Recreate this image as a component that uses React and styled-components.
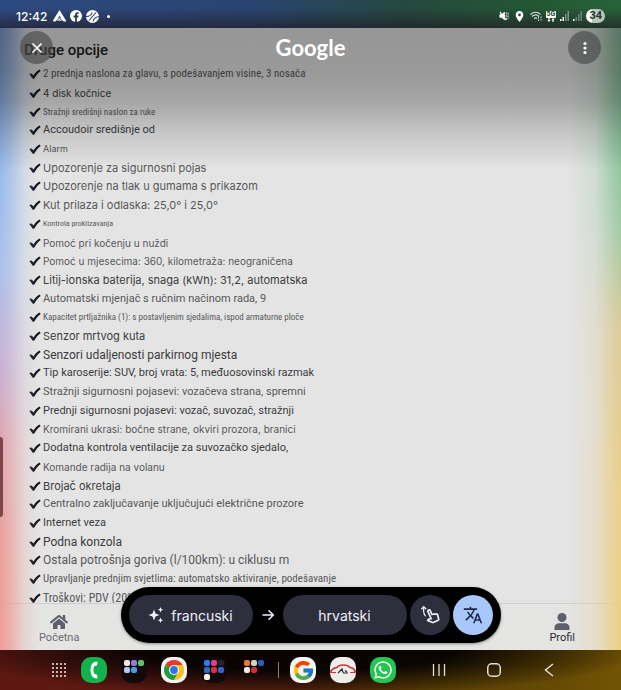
import React from 'react'
import styled, { createGlobalStyle, css } from 'styled-components'
import { FaHome, FaWhatsapp } from 'react-icons/fa'
import { FcGoogle } from 'react-icons/fc'
import { MdOutlineSwipeUp, MdTranslate, MdLocationOn } from 'react-icons/md'

const options = [
    { text: '2 prednja naslona za glavu, s podešavanjem visine, 3 nosača', size: 11, font: 'narrow' },
    { text: '4 disk kočnice', size: 10, font: 'wide', strong: true },
    { text: 'Stražnji središnji naslon za ruke', size: 9, font: 'narrow' },
    { text: 'Accoudoir središnje od', size: 11, strong: true },
    { text: 'Alarm', size: 9, font: 'wide' },
    { text: 'Upozorenje za sigurnosni pojas', size: 11, font: 'wide' },
    { text: 'Upozorenje na tlak u gumama s prikazom', size: 11, font: 'wide' },
    { text: 'Kut prilaza i odlaska: 25,0° i 25,0°', size: 11, font: 'wide' },
    { text: 'Kontrola proklizavanja', size: 8, font: 'narrow' },
    { text: 'Pomoć pri kočenju u nuždi', size: 10, font: 'wide' },
    { text: 'Pomoć u mjesecima: 360, kilometraža: neograničena', size: 10, font: 'wide' },
    { text: 'Litij-ionska baterija, snaga (kWh): 31,2, automatska', size: 11, font: 'wide', strong: true },
    { text: 'Automatski mjenjač s ručnim načinom rada, 9', size: 11 },
    { text: 'Kapacitet prtljažnika (1): s postavljenim sjedalima, ispod armaturne ploče', size: 9, font: 'narrow' },
    { text: 'Senzor mrtvog kuta', size: 11, font: 'wide', strong: true },
    { text: 'Senzori udaljenosti parkirnog mjesta', size: 12, strong: true },
    { text: 'Tip karoserije: SUV, broj vrata: 5, međuosovinski razmak', size: 11, strong: true },
    { text: 'Stražnji sigurnosni pojasevi: vozačeva strana, spremni', size: 11 },
    { text: 'Prednji sigurnosni pojasevi: vozač, suvozač, stražnji', size: 11, strong: true },
    { text: 'Kromirani ukrasi: bočne strane, okviri prozora, branici', size: 10, font: 'wide' },
    { text: 'Dodatna kontrola ventilacije za suvozačko sjedalo,', size: 11, strong: true },
    { text: 'Komande radija na volanu', size: 10, font: 'wide' },
    { text: 'Brojač okretaja', size: 11, font: 'wide', strong: true },
    { text: 'Centralno zaključavanje uključujući električne prozore', size: 11 },
    { text: 'Internet veza', size: 11, strong: true },
    { text: 'Podna konzola', size: 12, strong: true },
    { text: 'Ostala potrošnja goriva (l/100km): u ciklusu m', size: 12 },
    { text: 'Upravljanje prednjim svjetlima: automatsko aktiviranje, podešavanje', size: 11, font: 'narrow' },
    { text: 'Troškovi: PDV (20%)', size: 12, font: 'narrow' },
]

const fonts = {
    narrow: '"Roboto Condensed", Roboto, sans-serif',
    wide: 'Inter, sans-serif',
}

const mailFolder = ['#f1e6e6', '#8b7fd6', '#62c466', '#a9cdf3', '#4c9be0']
const socialFolder = ['#2f7bf0', '#e23f86', '#20242e', '#2b6fc4', '#d9303c', '#3563c9', '#f3f3f3']
const toolsFolder = ['#e8743b', '#cfd3c2', '#2a5fb8', '#f0e9e4', '#cf2f33']

function CheckMark() {
    return (
        <svg width="12" height="10" viewBox="0 0 12 10" aria-hidden="true">
            <path d="M0.3 5 C1.6 4 2.800 4.300 3.400 5.200 L4.400 6.400 C6 4 8 2 10.4 0.5 L11.700 1.900 C9 3.900 7 6.200 5.500 9.200 C5 10 4 10 3.400 9.300 Z" fill="#15151f" />
        </svg>
    )
}

function StatusIcons() {
    return (
        <StatusGroup>
            <svg width="10" height="12" viewBox="0 0 11 12" fill="none" stroke="#fff">
                <path d="M1 4.500h2L6 2v8L3 7.500H1z" fill="#fff" />
                <path d="M1 1.500l7 9" strokeWidth="1.200" />
                <path d="M8 2v8M10 2.500v7" strokeDasharray="2 1" />
            </svg>
            <MdLocationOn size={13} color="#fff" />
            <svg width="12" height="12" viewBox="0 0 12 12" fill="none" stroke="#d8e4da">
                <path d="M0.500 4.500C3.500 1.800 7.500 1.800 10.500 4.500M2 6.500c2-1.800 5-1.800 7 0M4 8.500c1-.8 2-.8 3 0" strokeWidth="1.100" />
                <path d="M8.500 11V6.500M11 6.500V11" strokeDasharray="1.500 1" />
            </svg>
            <FiveG>
                <span>5G</span>
                <svg width="8" height="4" viewBox="0 0 8 4" fill="#fff">
                    <path d="M0.500 2L2 4l1.500-2H2.600V0H1.400v2zM4.500 2L6 0l1.500 2H6.600v2H5.400V2z" />
                </svg>
            </FiveG>
            <svg width="9" height="10" viewBox="0 0 9 10">
                <path d="M0 8h1.500v2H0zM2.500 6H4v4H2.500z" fill="#fff" />
                <path d="M5 3h1.500v7H5zM7.500 0H9v10H7.500z" fill="#7c9482" />
            </svg>
            <svg width="9" height="10" viewBox="0 0 9 10">
                <path d="M0 8h1.500v2H0z" fill="#fff" />
                <path d="M2.500 6H4v4H2.500zM5 3h1.500v7H5zM7.500 0H9v10H7.500z" fill="#6c8472" />
            </svg>
            <Battery>34</Battery>
        </StatusGroup>
    )
}

function Folder({ colors, label, clear }) {
    return (
        <FolderTile type="button" aria-label={label} $clear={clear}>
            {colors.map((color, i) => <FolderDot key={i} $color={color} />)}
        </FolderTile>
    )
}

function App() {
    return (
        <Screen>
            <GlobalStyle />
            <StatusBar>
                <StatusGroup>
                    <Clock>12:42</Clock>
                    <svg width="13" height="12" viewBox="0 0 13 12">
                        <path d="M6.500 0 L13 10.500 C13 11.800 11.500 12 10.500 11.200 L6.500 8 L2.500 11.200 C1.500 12 0 11.800 0 10.500 Z" fill="#fff" />
                        <path d="M6.500 5.500 L8.500 9 L6.500 7.600 L4.500 9 Z" fill="#2b4267" />
                        <path d="M6.500 8.500 L9 11 L6.500 10.400 L4 11 Z" fill="#fff" />
                    </svg>
                    <svg width="12" height="12" viewBox="0 0 12 12">
                        <circle cx="6" cy="6" r="6" fill="#fff" />
                        <path d="M5.100 12V7.400H3.600V5.600h1.500V4.600c0-1.500.9-2.300 2.300-2.300h1.100v1.600h-.8c-.6 0-.8.3-.8.8v.9h1.600l-.3 1.800H6.900V12z" fill="#26395b" />
                    </svg>
                    <svg width="13" height="13" viewBox="0 0 13 13">
                        <circle cx="6.500" cy="6.500" r="6.500" fill="#fff" />
                        <path d="M0 6.500C3.500 6.500 5.500 5 6 2.500M3 10.500L10 2.500M7 11.500C7.500 9 9.500 7 13 6.500" fill="none" stroke="#26395b" strokeWidth="1.100" />
                    </svg>
                    <Notice />
                </StatusGroup>
                <StatusIcons />
            </StatusBar>

            <Page>
                <Title>Druge opcije</Title>
                <OptionList>
                    {options.map((option) => (
                        <Option key={option.text} $size={option.size} $font={option.font} $strong={option.strong}>
                            <CheckMark />
                            {option.text}
                        </Option>
                    ))}
                </OptionList>
                <BottomNav>
                    <NavLink href="#pocetna">
                        <FaHome size={18} color="#5d5f6b" />
                        Početna
                    </NavLink>
                    <NavLink href="#profil" $active>
                        <svg width="16" height="18" viewBox="0 0 16 18" fill="#5d5f6b">
                            <circle cx="8" cy="4.500" r="4.500" />
                            <path d="M0.500 17v-2.500c0-2.600 2-4.300 4.500-4.300h6c2.500 0 4.500 1.700 4.500 4.300V17z" />
                        </svg>
                        Profil
                    </NavLink>
                </BottomNav>
                <Glow />
                <Glow $right />
                <TopShade>
                    <RoundButton type="button" aria-label="Zatvori">
                        <svg width="12" height="12" viewBox="0 0 12 12" stroke="#fff" strokeWidth="1.600">
                            <path d="M1.500 1.500l9 9M10.500 1.500l-9 9" />
                        </svg>
                    </RoundButton>
                    <Logo>Google</Logo>
                    <RoundButton type="button" aria-label="Više opcija">
                        <svg width="4" height="14" viewBox="0 0 4 14" fill="#fff">
                            <circle cx="2" cy="2.500" r="1.600" />
                            <circle cx="2" cy="7" r="1.600" />
                            <circle cx="2" cy="11.500" r="1.600" />
                        </svg>
                    </RoundButton>
                </TopShade>
                <EdgeHandle />
                <TranslateBar>
                    <LanguageButton type="button">
                        <svg width="16" height="16" viewBox="0 0 16 16" fill="#eef0fb">
                            <path d="M6 2.500l1.500 4 4 1.500-4 1.500L6 13.500 4.500 9.500.5 8l4-1.500z" />
                            <path d="M12.500 0l.8 2 2 .8-2 .8-.8 2-.8-2-2-.8 2-.8zM12.500 10.500l.8 2 2 .8-2 .8-.8 1.900-.8-1.900-2-.8 2-.8z" />
                        </svg>
                        francuski
                    </LanguageButton>
                    <svg width="30" height="12" viewBox="0 0 30 12" fill="none" stroke="#eef0fb" strokeWidth="1.500">
                        <path d="M9.500 6h10.500M15.500 1.200L20.300 6l-4.800 4.800" />
                    </svg>
                    <LanguageButton type="button">hrvatski</LanguageButton>
                    <ToolButton type="button" aria-label="Odaberi tekst">
                        <MdOutlineSwipeUp size={20} />
                    </ToolButton>
                    <ToolButton type="button" aria-label="Prevedi" $active>
                        <MdTranslate size={20} />
                    </ToolButton>
                </TranslateBar>
            </Page>

            <Dock>
                <DockApps>
                    <PlainButton type="button" aria-label="Aplikacije">
                        <svg width="16" height="16" viewBox="0 0 16 16" fill="#f4efee">
                            {[2, 6, 10, 14].map((y) => [2, 6, 10, 14].map((x) => (
                                <circle key={x + '-' + y} cx={x} cy={y} r="1" />
                            )))}
                        </svg>
                    </PlainButton>
                    <AppTile type="button" aria-label="Telefon" $color="#12b24c">
                        <svg width="26" height="26" viewBox="0 0 26 26">
                            <path d="M15.500 4.500c-4 0-6 3.800-6 8.500s2 8.500 6 8.500c.7 0 1.100-.6 1-1.300l-.4-2c-.1-.7-.7-1-1.400-.9-1.500.2-2.300-1.900-2.300-4.300s.8-4.500 2.300-4.300c.7.1 1.300-.2 1.400-.9l.4-2c.1-.7-.3-1.300-1-1.300z" fill="#fff" />
                        </svg>
                    </AppTile>
                    <Folder colors={mailFolder} label="Pošta" />
                    <AppTile type="button" aria-label="Chrome" $color="#f5f3f1">
                        <svg width="20" height="20" viewBox="0 0 20 20">
                            <circle cx="10" cy="10" r="10" fill="#fbc116" />
                            <path d="M10 10 L1.340 5 A10 10 0 0 1 18.660 5 Z" fill="#e33b2e" />
                            <path d="M10 10 L1.340 5 A10 10 0 0 0 10 20 L14 12.500 Z" fill="#229a4a" />
                            <path d="M10 5h8.660A10 10 0 0 1 10 20l4.300-7.500z" fill="#fbc116" />
                            <circle cx="10" cy="10" r="5" fill="#fff" />
                            <circle cx="10" cy="10" r="3.900" fill="#2f75e8" />
                        </svg>
                    </AppTile>
                    <Folder colors={socialFolder} label="Društvene mreže" />
                    <Folder colors={toolsFolder} label="Alati" clear />
                    <Divider />
                    <AppTile type="button" aria-label="Google" $color="#f7f5f3">
                        <FcGoogle size={23} />
                    </AppTile>
                    <AppTile type="button" aria-label="Auto" $color="#efedec">
                        <svg width="26" height="14" viewBox="0 0 26 14" fill="none">
                            <path d="M1 8.500C2 5.500 4 5 7 4.500 9 1.500 17 1 20 4.500c3 .3 5 1.500 5 5M1 7v3M25 7v3" stroke="#c5353b" strokeWidth="1.600" />
                            <path d="M1 9.500h5M20 9.500h5" stroke="#c5353b" strokeWidth="1.200" />
                            <path d="M8 10l4-4 1 3.500M13 10h5M15 7.500l2 1.500" stroke="#2b2726" strokeWidth="1.200" />
                        </svg>
                    </AppTile>
                    <AppTile type="button" aria-label="WhatsApp" $color="#25c552">
                        <FaWhatsapp size={20} color="#fff" />
                    </AppTile>
                </DockApps>
                <SystemNav>
                    <PlainButton type="button" aria-label="Nedavno">
                        <svg width="16" height="16" viewBox="0 0 16 16" stroke="#e6dfd2" strokeWidth="1.300">
                            <path d="M2.500 2v12M8 2v12M13.500 2v12" />
                        </svg>
                    </PlainButton>
                    <PlainButton type="button" aria-label="Početni zaslon">
                        <svg width="16" height="16" viewBox="0 0 16 16" fill="none" stroke="#e6dfd2" strokeWidth="1.500">
                            <rect x="1.750" y="1.750" width="12.500" height="12.500" rx="4" />
                        </svg>
                    </PlainButton>
                    <PlainButton type="button" aria-label="Natrag">
                        <svg width="16" height="16" viewBox="0 0 16 16" fill="none" stroke="#e6dfd2" strokeWidth="1.500">
                            <path d="M12 2L4.500 8l7.500 6" />
                        </svg>
                    </PlainButton>
                </SystemNav>
            </Dock>
        </Screen>
    )
}

const GlobalStyle = createGlobalStyle`
    * { box-sizing: border-box; }
    body {
        margin: 0;
        background: #000;
        font-family: Roboto, "Noto Sans", sans-serif;
    }
    button {
        border: 0;
        padding: 0;
        font: inherit;
        color: inherit;
        background: none;
        cursor: pointer;
    }
    svg { display: block; flex: none; }
`;

const Screen = styled.div`
    display: flex;
    flex-direction: column;
    min-height: 100vh;
`;

const StatusBar = styled.header`
    display: flex;
    justify-content: space-between;
    align-items: center;
    height: 28px;
    padding: 4px 16px 0;
    color: #fff;
    background:
        linear-gradient(to bottom, transparent 30%, rgba(34, 26, 36, 0.65)),
        linear-gradient(to right, #2d4a80, #294471 40%, #25493f 66%, #235633 85%, #27623a);
`;

const StatusGroup = styled.div`
    display: flex;
    align-items: center;
    gap: 4px;
`;

const Clock = styled.time`
    margin-right: 2px;
    font: 500 12px Inter, sans-serif;
`;

const Notice = styled.i`
    width: 3px;
    height: 3px;
    margin-left: 4px;
    border-radius: 50%;
    background: #fff;
`;

const FiveG = styled.div`
    display: flex;
    flex-direction: column;
    align-items: center;
    span {
        padding: 0 1px;
        border-radius: 1px;
        font: 700 7px/7px Roboto, sans-serif;
        color: #23472e;
        background: #fff;
    }
`;

const Battery = styled.span`
    padding: 0 3px;
    border-radius: 7px;
    font: 700 11px/14px Roboto, sans-serif;
    color: #26382b;
    background: linear-gradient(to right, #fff 34%, #b9c6bb 34%);
`;

const Page = styled.main`
    position: relative;
    display: flex;
    flex: 1;
    flex-direction: column;
    overflow: hidden;
    background: #e4e4e4;
`;

const Title = styled.h1`
    margin: 0;
    padding: 12px 24px 5px;
    font: 500 15px/20px Roboto, sans-serif;
    color: #202020;
`;

const OptionList = styled.ul`
    display: grid;
    flex: 1;
    grid-auto-rows: 1fr;
    margin: 0 0 -4px;
    padding: 0 29px;
    list-style: none;
`;

const Option = styled.li`
    display: flex;
    align-items: center;
    gap: 2px;
    min-height: 18px;
    line-height: 18px;
    white-space: nowrap;
    font-size: ${({ $size }) => $size}px;
    color: ${({ $strong }) => ($strong ? '#3c3c3e' : '#58585a')};
    ${({ $font }) => $font && css`
        font-family: ${fonts[$font]};
    `}
`;

const BottomNav = styled.nav`
    position: relative;
    display: flex;
    justify-content: space-between;
    height: 47px;
    padding: 9px 46px 0 39px;
    border-top: 1px solid #cfcfcf;
    background: #e4e4e3;
`;

const NavLink = styled.a`
    display: flex;
    flex-direction: column;
    align-items: center;
    font-size: 11px;
    line-height: 14px;
    text-decoration: none;
    color: ${({ $active }) => ($active ? '#2b2b2f' : '#6b6c75')};
`;

const Glow = styled.div`
    position: absolute;
    top: 0;
    bottom: 0;
    pointer-events: none;
    ${({ $right }) => $right ? css`
        right: 0;
        width: 52px;
        background: linear-gradient(to bottom, #86b094, #8cc49c 20%, #a5cba6 33%, #dccb97 48%, #eccf86 75%, #eccf80);
        mask-image: linear-gradient(to left, #000, rgba(0, 0, 0, 0.8) 15%, rgba(0, 0, 0, 0.25) 50%, transparent);
    ` : css`
        left: 0;
        width: 38px;
        background: linear-gradient(to bottom, #7797c9, #9abcec 25%, #a9bfea 38%, #c8b0d4 54%, #e2a5ac 68%, #ea9f98 85%, #f09c98);
        mask-image: linear-gradient(to right, #000, rgba(0, 0, 0, 0.7) 30%, rgba(0, 0, 0, 0.2) 65%, transparent);
    `}
`;

const TopShade = styled.div`
    position: absolute;
    top: 0;
    left: 0;
    right: 0;
    display: flex;
    justify-content: space-between;
    align-items: flex-start;
    height: 142px;
    padding: 3px 20px;
    background: linear-gradient(to bottom, rgba(0, 0, 0, 0.34), rgba(0, 0, 0, 0.33) 30%, rgba(0, 0, 0, 0.27) 52%, rgba(0, 0, 0, 0.12) 75%, transparent);
`;

const RoundButton = styled.button`
    display: flex;
    justify-content: center;
    align-items: center;
    width: 33px;
    height: 33px;
    border-radius: 50%;
    background: rgba(66, 66, 68, 0.6);
`;

const Logo = styled.div`
    font: 700 22px/33px Lato, sans-serif;
    color: #fff;
`;

const EdgeHandle = styled.div`
    position: absolute;
    top: 409px;
    left: 0;
    width: 3px;
    height: 80px;
    border-radius: 0 3px 3px 0;
    background: #7c474b;
`;

const TranslateBar = styled.div`
    position: absolute;
    bottom: 7px;
    left: 50%;
    display: flex;
    align-items: center;
    padding: 8px;
    border-radius: 28px;
    transform: translateX(-50%);
    background: #000;
    box-shadow: 0 1px 3px rgba(0, 0, 0, 0.4);
`;

const LanguageButton = styled.button`
    display: flex;
    justify-content: center;
    align-items: center;
    gap: 7px;
    width: 124px;
    height: 40px;
    border-radius: 20px;
    font: 400 14px Inter, sans-serif;
    color: #eef0fb;
    background: #2d2f3d;
`;

const ToolButton = styled.button`
    display: flex;
    justify-content: center;
    align-items: center;
    width: 40px;
    height: 40px;
    margin-left: 3px;
    border-radius: 50%;
    color: ${({ $active }) => ($active ? '#1d2b49' : '#eef0fb')};
    background: ${({ $active }) => ($active ? '#a8c7fa' : '#2d2f3d')};
`;

const Dock = styled.footer`
    display: flex;
    justify-content: space-between;
    align-items: center;
    height: 40px;
    padding: 0 64px 0 51px;
    background:
        radial-gradient(ellipse 56% 115% at 48% 0, rgba(5, 2, 2, 0.95) 45%, transparent),
        linear-gradient(to right, #5e1812, #5a1a12 30%, #5a270c 50%, #5a3f04 70%, #664b04 90%, #735405);
`;

const DockApps = styled.div`
    display: flex;
    align-items: center;
    gap: 14px;
`;

const SystemNav = styled.div`
    display: flex;
    gap: 39px;
`;

const PlainButton = styled.button`
    display: flex;
    width: 16px;
    height: 16px;
`;

const AppTile = styled.button`
    display: flex;
    justify-content: center;
    align-items: center;
    width: 26px;
    height: 26px;
    border-radius: 10px;
    overflow: hidden;
    background: ${({ $color }) => $color};
`;

const FolderTile = styled.button`
    display: grid;
    grid-template-columns: repeat(3, 6px);
    grid-auto-rows: 6px;
    gap: 1px;
    width: 26px;
    height: 26px;
    padding: 3px;
    border-radius: 10px;
    background: ${({ $clear }) => ($clear ? 'transparent' : '#14090a')};
`;

const FolderDot = styled.i`
    border-radius: 2px;
    background: ${({ $color }) => $color};
`;

const Divider = styled.i`
    width: 1px;
    height: 16px;
    margin: 0 -3px;
    background: #8c7c72;
`;

export default App
